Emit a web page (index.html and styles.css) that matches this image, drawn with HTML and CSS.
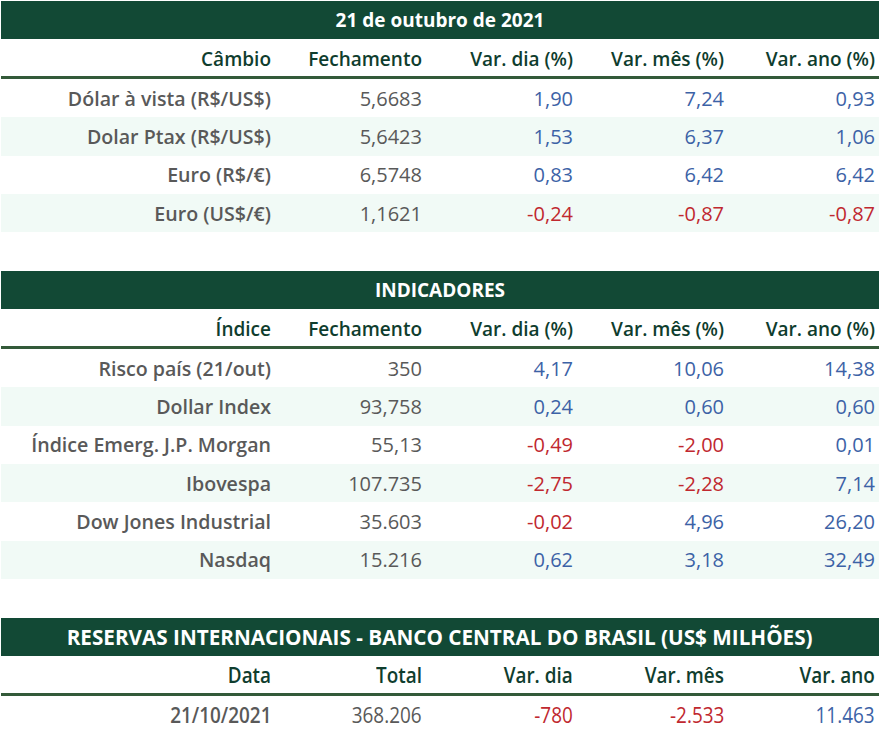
FILE: index.html
```html
<!DOCTYPE html>
<html lang="pt-BR">
<head>
<meta charset="utf-8">
<title>Mercado 21 de outubro de 2021</title>
<link rel="stylesheet" href="styles.css">
</head>
<body>
<div class="page">
  <section class="tbl t1">
    <div class="title">21 de outubro de 2021</div>
    <div class="row head">
      <div>Câmbio</div><div>Fechamento</div><div>Var. dia (%)</div><div>Var. mês (%)</div><div>Var. ano (%)</div>
    </div>
    <div class="row">
      <div class="lbl">Dólar à vista (R$/US$)</div><div>5,6683</div><div class="pos">1,90</div><div class="pos">7,24</div><div class="pos">0,93</div>
    </div>
    <div class="row alt">
      <div class="lbl">Dolar Ptax (R$/US$)</div><div>5,6423</div><div class="pos">1,53</div><div class="pos">6,37</div><div class="pos">1,06</div>
    </div>
    <div class="row">
      <div class="lbl">Euro (R$/€)</div><div>6,5748</div><div class="pos">0,83</div><div class="pos">6,42</div><div class="pos">6,42</div>
    </div>
    <div class="row alt">
      <div class="lbl">Euro (US$/€)</div><div>1,1621</div><div class="neg">-0,24</div><div class="neg">-0,87</div><div class="neg">-0,87</div>
    </div>
  </section>

  <section class="tbl t2">
    <div class="title">INDICADORES</div>
    <div class="row head">
      <div>Índice</div><div>Fechamento</div><div>Var. dia (%)</div><div>Var. mês (%)</div><div>Var. ano (%)</div>
    </div>
    <div class="row">
      <div class="lbl">Risco país (21/out)</div><div>350</div><div class="pos">4,17</div><div class="pos">10,06</div><div class="pos">14,38</div>
    </div>
    <div class="row alt">
      <div class="lbl">Dollar Index</div><div>93,758</div><div class="pos">0,24</div><div class="pos">0,60</div><div class="pos">0,60</div>
    </div>
    <div class="row">
      <div class="lbl">Índice Emerg. J.P. Morgan</div><div>55,13</div><div class="neg">-0,49</div><div class="neg">-2,00</div><div class="pos">0,01</div>
    </div>
    <div class="row alt">
      <div class="lbl">Ibovespa</div><div>107.735</div><div class="neg">-2,75</div><div class="neg">-2,28</div><div class="pos">7,14</div>
    </div>
    <div class="row">
      <div class="lbl">Dow Jones Industrial</div><div>35.603</div><div class="neg">-0,02</div><div class="pos">4,96</div><div class="pos">26,20</div>
    </div>
    <div class="row alt">
      <div class="lbl">Nasdaq</div><div>15.216</div><div class="pos">0,62</div><div class="pos">3,18</div><div class="pos">32,49</div>
    </div>
  </section>

  <section class="tbl t3 cond">
    <div class="title"><span>RESERVAS INTERNACIONAIS - BANCO CENTRAL DO BRASIL (US$ MILHÕES)</span></div>
    <div class="row head">
      <div><span>Data</span></div><div><span>Total</span></div><div><span>Var. dia</span></div><div><span>Var. mês</span></div><div><span>Var. ano</span></div>
    </div>
    <div class="row">
      <div class="lbl"><span>21/10/2021</span></div><div><span>368.206</span></div><div class="neg"><span>-780</span></div><div class="neg"><span>-2.533</span></div><div class="pos"><span>11.463</span></div>
    </div>
  </section>
</div>
</body>
</html>
```
FILE: styles.css
```css
html, body {
  margin: 0;
  padding: 0;
  background: #ffffff;
}
body {
  font-family: "Open Sans", "DejaVu Sans", sans-serif;
  color: #595959;
}
.page {
  width: 878px;
  padding: 1px 0 0 1px;
  display: flex;
  flex-direction: column;
  gap: 39px;
}
.title {
  height: 38px;
  background: #124935;
  color: #ffffff;
  font-weight: 700;
  font-size: 19px;
  display: flex;
  align-items: center;
  justify-content: center;
}
.row {
  display: grid;
  grid-template-columns: 274px 151px 151px 151px 151px;
  height: 38.3px;
  font-size: 20px;
}
.row > div {
  display: flex;
  align-items: center;
  justify-content: flex-end;
  padding-right: 4px;
  white-space: nowrap;
}
.row.head {
  height: 37px;
  border-bottom: 3px solid #335a39;
  color: #0f3d2e;
  font-weight: 600;
  font-size: 19px;
}
.row.head > div {
  align-items: flex-end;
  padding-bottom: 4px;
}
.row.alt {
  background: #f1faf6;
}
.lbl {
  font-weight: 600;
  font-size: 19.6px;
}
.pos {
  color: #3c62a6;
}
.neg {
  color: #c0282f;
}
.cond span {
  display: inline-block;
  transform: scaleX(0.9);
  transform-origin: right center;
}
.cond .title span {
  transform-origin: center center;
  transform: scaleX(0.985);
  font-size: 21px;
}
.cond .row,
.cond .row .lbl {
  font-size: 21px;
}
```
